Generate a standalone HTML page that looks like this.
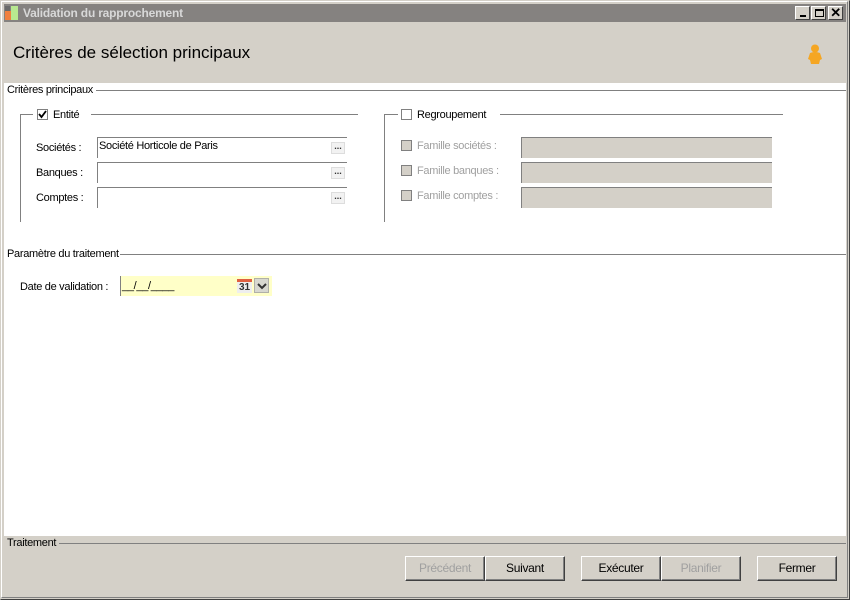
<!DOCTYPE html>
<html><head><meta charset="utf-8"><style>
*{margin:0;padding:0;box-sizing:border-box}
body{width:850px;height:600px;background:#d4d0c8;position:relative;overflow:hidden;font-family:"Liberation Sans",sans-serif;font-size:11px;letter-spacing:-0.3px;color:#000}
.a{position:absolute}
.t{position:absolute;white-space:nowrap}
.inp{position:absolute;height:21px;background:#fff;border-top:1px solid #808080;border-left:1px solid #808080}
.dis{position:absolute;height:21px;background:#d4d0c8;border-top:1px solid #808080;border-left:1px solid #808080}
.dots{position:absolute;width:14px;height:12px;border:1px solid #ddd;background:#f2f2f2;font-size:9px;line-height:6px;text-align:center;color:#333;font-weight:bold;letter-spacing:0}
.cb{position:absolute;width:11px;height:11px;border:1px solid #808080;background:#fff}
.cbd{position:absolute;width:11px;height:11px;border:1px solid #808080;background:#d4d0c8}
.btn{position:absolute;top:556px;width:80px;height:25px;background:#d4d0c8;border:1px solid;border-color:#fff #404040 #404040 #fff;box-shadow:inset -1px -1px 0 #808080;text-align:center;line-height:22px;font-size:12px}
.gd{color:#a0a0a0}
.hl{position:absolute;height:1px;background:#808080}
.vl{position:absolute;width:1px;background:#808080}
</style></head><body>
<div class="a" style="left:0;top:0;width:850px;height:600px;border:1px solid;border-color:#d4d0c8 #404040 #404040 #d4d0c8"></div>
<div class="a" style="left:1px;top:1px;width:847px;height:597px;border:1px solid;border-color:#fff #808080 #808080 #fff"></div>
<div class="a" style="left:4px;top:4px;width:842px;height:18px;background:#858280"></div>
<div class="a" style="left:5px;top:6px;width:5px;height:5px;background:#6a6a6a"></div>
<div class="a" style="left:5px;top:11px;width:6px;height:9px;background:#f08040"></div>
<div class="a" style="left:11px;top:6px;width:7px;height:14px;background:#b8e890"></div>
<div class="t" style="left:23px;top:6px;font-weight:bold;color:#d8d8d8;font-size:12px;letter-spacing:-0.2px">Validation du rapprochement</div>
<div class="a" style="left:795px;top:6px;width:15px;height:14px;background:#d4d0c8;border:1px solid;border-color:#fff #404040 #404040 #fff"><div class="a" style="left:4px;top:8px;width:6px;height:2px;background:#000"></div></div>
<div class="a" style="left:811px;top:6px;width:15px;height:14px;background:#d4d0c8;border:1px solid;border-color:#fff #404040 #404040 #fff"><div class="a" style="left:3px;top:2px;width:9px;height:8px;border:1px solid #000;border-top-width:2px"></div></div>
<div class="a" style="left:828px;top:6px;width:15px;height:14px;background:#d4d0c8;border:1px solid;border-color:#fff #404040 #404040 #fff;font-size:13px;line-height:11px;text-align:center;font-weight:bold">✕</div>
<div class="t" style="left:13px;top:43px;font-size:17px;letter-spacing:0">Critères de sélection principaux</div>
<svg class="a" style="left:806px;top:43px" width="18" height="22"><circle cx="9" cy="5.5" r="4" fill="#f5a623"/><path d="M4 10 Q9 8 14 10 L16 16 L14 17 L13 21 L5 21 L4 17 L2 16 Z" fill="#f5a623"/></svg>
<div class="a" style="left:4px;top:83px;width:842px;height:453px;background:#fff"></div>
<div class="t" style="left:7px;top:84px">Critères principaux</div>
<div class="hl" style="left:96px;top:90px;width:750px"></div>
<div class="hl" style="left:20px;top:114px;width:13px"></div><div class="vl" style="left:20px;top:114px;height:108px"></div>
<div class="cb" style="left:37px;top:109px"></div>
<svg class="a" style="left:37px;top:109px" width="11" height="11"><path d="M2 5 L4.5 8 L9 2" stroke="#000" stroke-width="1.8" fill="none"/></svg>
<div class="t" style="left:53px;top:109px">Entité</div>
<div class="hl" style="left:91px;top:114px;width:267px"></div>
<div class="t" style="left:36px;top:142px">Sociétés :</div>
<div class="t" style="left:36px;top:167px">Banques :</div>
<div class="t" style="left:36px;top:192px">Comptes :</div>
<div class="inp" style="left:97px;top:137px;width:250px"><div class="t" style="left:1px;top:2px">Société Horticole de Paris</div><div class="dots" style="left:233px;top:4px">...</div></div>
<div class="inp" style="left:97px;top:162px;width:250px"><div class="dots" style="left:233px;top:4px">...</div></div>
<div class="inp" style="left:97px;top:187px;width:250px"><div class="dots" style="left:233px;top:4px">...</div></div>
<div class="hl" style="left:384px;top:114px;width:14px"></div><div class="vl" style="left:384px;top:114px;height:108px"></div>
<div class="cb" style="left:401px;top:109px"></div>
<div class="t" style="left:417px;top:109px">Regroupement</div>
<div class="hl" style="left:500px;top:114px;width:283px"></div>
<div class="cbd" style="left:401px;top:140px"></div><div class="t gd" style="left:417px;top:140px">Famille sociétés :</div>
<div class="cbd" style="left:401px;top:165px"></div><div class="t gd" style="left:417px;top:165px">Famille banques :</div>
<div class="cbd" style="left:401px;top:190px"></div><div class="t gd" style="left:417px;top:190px">Famille comptes :</div>
<div class="dis" style="left:521px;top:137px;width:251px"></div>
<div class="dis" style="left:521px;top:162px;width:251px"></div>
<div class="dis" style="left:521px;top:187px;width:251px"></div>
<div class="t" style="left:7px;top:248px">Paramètre du traitement</div>
<div class="hl" style="left:120px;top:254px;width:726px"></div>
<div class="t" style="left:20px;top:281px">Date de validation :</div>
<div class="a" style="left:120px;top:276px;width:152px;height:20px;background:#ffffc8;border-left:1px solid #808080"></div>
<div class="t" style="left:122px;top:280px">__/__/____</div>
<div class="a" style="left:237px;top:279px;width:15px;height:14px;background:#eee;border-top:3px solid #e06040;font-size:10px;font-weight:bold;text-align:center;line-height:11px;color:#333;letter-spacing:0">31</div>
<div class="a" style="left:254px;top:278px;width:15px;height:15px;background:#d8d8d0;border:1px solid #b0b0a8"><svg class="a" style="left:2px;top:3px" width="10" height="8"><path d="M1 2 L5 6 L9 2" stroke="#333" stroke-width="2" fill="none"/></svg></div>
<div class="t" style="left:7px;top:537px">Traitement</div>
<div class="hl" style="left:59px;top:543px;width:787px"></div>
<div class="btn gd" style="left:405px">Précédent</div>
<div class="btn" style="left:485px">Suivant</div>
<div class="btn" style="left:581px">Exécuter</div>
<div class="btn gd" style="left:661px">Planifier</div>
<div class="btn" style="left:757px">Fermer</div>
</body></html>
